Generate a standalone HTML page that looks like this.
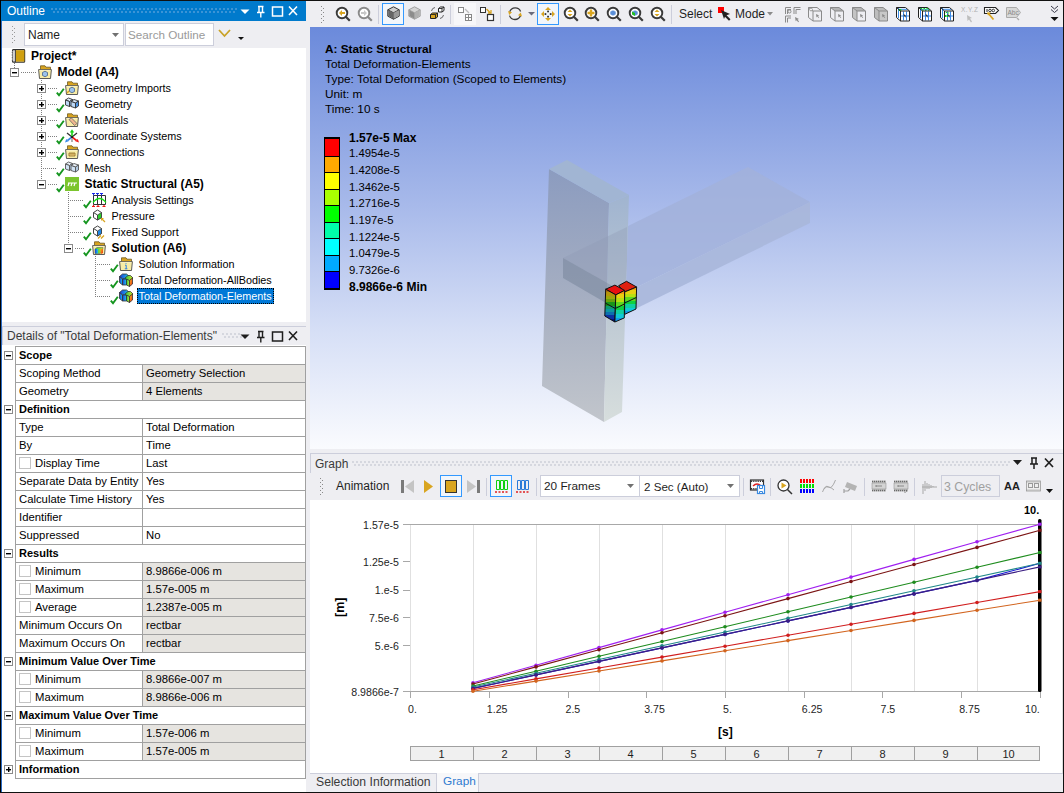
<!DOCTYPE html>
<html><head><meta charset="utf-8">
<style>
*{box-sizing:border-box;margin:0;padding:0}
html,body{width:1064px;height:793px;overflow:hidden;background:#EEEEF2;font-family:"Liberation Sans",sans-serif;color:#000;position:relative}
.a{position:absolute}
.t{position:absolute;white-space:pre;line-height:1}
svg{position:absolute;overflow:visible}
.dots{background-image:radial-gradient(circle at 1px 1px,#7fb0e0 0.6px,transparent 0.8px),radial-gradient(circle at 3px 4px,#7fb0e0 0.6px,transparent 0.8px);background-size:4px 6px}
.dotg{background-image:radial-gradient(circle at 1px 1px,#b8bcc8 0.6px,transparent 0.8px),radial-gradient(circle at 3px 4px,#b8bcc8 0.6px,transparent 0.8px);background-size:4px 6px}
.tr{position:absolute;font-size:10.8px;white-space:pre;line-height:16px;height:16px}
.trb{font-weight:bold;font-size:12px}
.box{position:absolute;width:9px;height:9px;border:1px solid #8a8a8a;background:#fff}
.box:before{content:"";position:absolute;left:1px;top:3px;width:5px;height:1px;background:#000;box-shadow:0 0.4px 0 #000}
.box.p:after{content:"";position:absolute;left:2.5px;top:1px;width:1px;height:5px;background:#000;box-shadow:0.4px 0 0 #000}
.hd{position:absolute;height:1px;background-image:linear-gradient(90deg,#808080 50%,transparent 50%);background-size:2px 1px}
.vd{position:absolute;width:1px;background-image:linear-gradient(#808080 50%,transparent 50%);background-size:1px 2px}
.k{position:absolute;font-size:11.3px;white-space:pre;line-height:1}
.kb{font-weight:bold;font-size:11px}
.cb{position:absolute;width:12px;height:12px;border:1px solid #C4C4C4;background:#fff}
.sep{position:absolute;width:1px;background:#CCCEDB}
</style></head><body>
<div class="a" style="left:0;top:0;width:1064px;height:1px;background:#111"></div>
<div class="a" style="left:0;top:0;width:1px;height:793px;background:#000"></div>
<div class="a" style="left:1px;top:21px;width:1px;height:772px;background:#2b6cc4"></div>
<div class="a" style="left:1063px;top:0;width:1px;height:793px;background:#111"></div>
<div class="a" style="left:0;top:792px;width:1064px;height:1px;background:#111"></div>
<div class="a" style="left:1px;top:1px;width:305px;height:20px;background:#007ACC"></div>
<div class="t" style="left:7px;top:5px;font-size:12px;color:#fff">Outline</div>
<div class="a dots" style="left:51px;top:8px;width:186px;height:6px"></div>
<svg style="left:240px;top:5px" width="60" height="13" viewBox="0 0 60 13">
 <path d="M0.5 4.5h9l-4.5 4.5z" fill="#fff"/>
 <path d="M18 1.5h5.5M19 1.5v6M22.5 1.5v6M17 7.5h7.5M20.8 7.5v5" stroke="#fff" stroke-width="1.4" fill="none"/>
 <rect x="32.5" y="2" width="10" height="9" stroke="#fff" stroke-width="1.5" fill="none"/>
 <path d="M49 1.5l8 8.5M57 1.5l-8 8.5" stroke="#fff" stroke-width="1.6"/>
</svg>
<!-- outline toolbar -->
<svg style="left:12px;top:26px" width="4" height="18" viewBox="0 0 4 18"><rect x="0" y="0" width="1" height="1" fill="#999"/><rect x="2" y="2" width="1" height="1" fill="#999"/><rect x="0" y="4" width="1" height="1" fill="#999"/><rect x="2" y="6" width="1" height="1" fill="#999"/><rect x="0" y="8" width="1" height="1" fill="#999"/><rect x="2" y="10" width="1" height="1" fill="#999"/><rect x="0" y="12" width="1" height="1" fill="#999"/><rect x="2" y="14" width="1" height="1" fill="#999"/><rect x="0" y="16" width="1" height="1" fill="#999"/></svg>
<div class="a" style="left:24px;top:23px;width:100px;height:23px;background:#fff;border:1px solid #CCCEDB"></div>
<div class="t" style="left:28px;top:29px;font-size:12px;color:#1e1e1e">Name</div>
<svg style="left:112px;top:33px" width="8" height="5"><path d="M0 0h7l-3.5 4z" fill="#717171"/></svg>
<div class="a" style="left:125px;top:23px;width:89px;height:23px;background:#fff;border:1px solid #CCCEDB"></div>
<div class="t" style="left:128px;top:29px;font-size:11.7px;color:#9a9a9a">Search Outline</div>
<svg style="left:218px;top:29px" width="14" height="9"><path d="M1 1l5.5 6 5.5-6" stroke="#C9A227" stroke-width="1.8" fill="none"/></svg>
<svg style="left:238px;top:37px" width="7" height="4"><path d="M0 0h6l-3 3z" fill="#111"/></svg>
<div class="a" style="left:2px;top:48px;width:304px;height:274px;background:#fff"></div>
<svg style="left:0;top:0" width="0" height="0"><defs><linearGradient id="rg1" x1="0" y1="0" x2="1" y2="0"><stop offset="0" stop-color="#1a3ad8"/><stop offset="1" stop-color="#20d0e8"/></linearGradient><linearGradient id="rg2" x1="0" y1="0" x2="1" y2="0"><stop offset="0" stop-color="#20c850"/><stop offset="1" stop-color="#d8e020"/></linearGradient><linearGradient id="rg3" x1="0" y1="0" x2="1" y2="1"><stop offset="0" stop-color="#f0c020"/><stop offset="1" stop-color="#f02810"/></linearGradient></defs></svg>
<div class="vd" style="left:14px;top:63px;height:6px"></div>
<div class="vd" style="left:41px;top:80px;height:100px"></div>
<div class="vd" style="left:68px;top:192px;height:53px"></div>
<div class="vd" style="left:95px;top:256px;height:42px"></div>
<svg style="left:11px;top:48px" width="14" height="14" viewBox="0 0 14 14"><rect x="1.6" y="1.6" width="12" height="12.6" rx="0.8" fill="#fff" stroke="#333" stroke-width="1.2"/><rect x="4.6" y="2.2" width="8.8" height="11.4" fill="#D0A010"/><path d="M4.3 1.6v12.6" stroke="#333" stroke-width="1.1"/><path d="M1 3q1.2 0.8 0 1.6q1.2 0.8 0 1.6q1.2 0.8 0 1.6q1.2 0.8 0 1.6q1.2 0.8 0 1.6q1.2 .8 0 1.6" stroke="#aaa" stroke-width="1" fill="none"/></svg>
<div class="tr trb" style="left:31px;top:48px">Project*</div>
<div class="box" style="left:10px;top:68px"></div>
<div class="hd" style="left:21px;top:72px;width:16px"></div>
<svg style="left:38px;top:65px" width="14" height="14" viewBox="0 0 14 14"><path d="M2.5 0.8h4.5l1 1.4h4.5v3.3H2.5z" fill="#D8A420" stroke="#6e5820" stroke-width="0.8"/><path d="M0.6 4.6h12.8l-0.9 8.9H1.5z" fill="#F8ECA6" stroke="#4a4a4a" stroke-width="0.9"/><path d="M1.6 5.4h10.8" stroke="#fff8d0" stroke-width="0.8"/><path d="M4.5 7.5l2.5-1.3 2.5 1.3v3l-2.5 1.3-2.5-1.3z" fill="#9cc3ec" stroke="#44628a" stroke-width="0.8"/></svg>
<div class="tr trb" style="left:57.5px;top:64px">Model (A4)</div>
<div class="box p" style="left:37px;top:84px"></div>
<div class="hd" style="left:48px;top:88px;width:9px"></div>
<svg style="left:56px;top:88px" width="9" height="9" viewBox="0 0 9 9"><path d="M0.8 4.6l2.2 2.6 4.8-6.4" stroke="#14951e" stroke-width="1.9" fill="none"/></svg>
<svg style="left:65px;top:81px" width="14" height="14" viewBox="0 0 14 14"><path d="M2.5 0.8h4.5l1 1.4h4.5v3.3H2.5z" fill="#D8A420" stroke="#6e5820" stroke-width="0.8"/><path d="M0.6 4.6h12.8l-0.9 8.9H1.5z" fill="#F8ECA6" stroke="#4a4a4a" stroke-width="0.9"/><path d="M1.6 5.4h10.8" stroke="#fff8d0" stroke-width="0.8"/><path d="M4.5 7.5l2.5-1.3 2.5 1.3v3l-2.5 1.3-2.5-1.3z" fill="#9cc3ec" stroke="#44628a" stroke-width="0.8"/><path d="M2 12l2-2" stroke="#D9A520" stroke-width="1.5"/></svg>
<div class="tr" style="left:84.5px;top:80px">Geometry Imports</div>
<div class="box p" style="left:37px;top:100px"></div>
<div class="hd" style="left:48px;top:104px;width:9px"></div>
<svg style="left:56px;top:104px" width="9" height="9" viewBox="0 0 9 9"><path d="M0.8 4.6l2.2 2.6 4.8-6.4" stroke="#14951e" stroke-width="1.9" fill="none"/></svg>
<svg style="left:65px;top:97px" width="14" height="14" viewBox="0 0 14 14"><path d="M0.5 3l3-2 4 1.5-3 2z" fill="#DDEBFA" stroke="#333" stroke-width="0.9"/><path d="M0.5 3l4 1.5v5l-4-1.5z" fill="#BCD8F6" stroke="#333" stroke-width="0.9"/><path d="M4.5 4.5l3-2v5l-3 2z" fill="#9CC4EE" stroke="#333" stroke-width="0.9"/><path d="M6 4.5l3-2 4.5 1.5-3 2z" fill="#DDEBFA" stroke="#333" stroke-width="0.9"/><path d="M6 4.5l4.5 1.5v5L6 9.5z" fill="#BCD8F6" stroke="#333" stroke-width="0.9"/><path d="M10.5 6l3-2v5l-3 2z" fill="#4C94E4" stroke="#333" stroke-width="0.9"/></svg>
<div class="tr" style="left:84.5px;top:96px">Geometry</div>
<div class="box p" style="left:37px;top:116px"></div>
<div class="hd" style="left:48px;top:120px;width:9px"></div>
<svg style="left:56px;top:120px" width="9" height="9" viewBox="0 0 9 9"><path d="M0.8 4.6l2.2 2.6 4.8-6.4" stroke="#14951e" stroke-width="1.9" fill="none"/></svg>
<svg style="left:65px;top:113px" width="14" height="14" viewBox="0 0 14 14"><path d="M2.5 0.8h4.5l1 1.4h4.5v3.3H2.5z" fill="#D8A420" stroke="#6e5820" stroke-width="0.8"/><path d="M0.6 4.6h12.8l-0.9 8.9H1.5z" fill="#F8ECA6" stroke="#4a4a4a" stroke-width="0.9"/><path d="M1.6 5.4h10.8" stroke="#fff8d0" stroke-width="0.8"/><path d="M4 6.5l2.5-1.5 5.5 5.5-2.5 2z" fill="#F2B890" stroke="#666" stroke-width="0.8"/></svg>
<div class="tr" style="left:84.5px;top:112px">Materials</div>
<div class="box p" style="left:37px;top:132px"></div>
<div class="hd" style="left:48px;top:136px;width:9px"></div>
<svg style="left:56px;top:136px" width="9" height="9" viewBox="0 0 9 9"><path d="M0.8 4.6l2.2 2.6 4.8-6.4" stroke="#14951e" stroke-width="1.9" fill="none"/></svg>
<svg style="left:65px;top:129px" width="14" height="14" viewBox="0 0 14 14"><path d="M7 8L2 4M7 8l5-4" stroke="#333" stroke-width="1.3"/><path d="M7 8V3" stroke="#18d018" stroke-width="1.6"/><path d="M4.8 3.6L7 0.3l2.2 3.3z" fill="#18d018"/><path d="M7 8l-4.5 3.5" stroke="#3a8ae8" stroke-width="1.6"/><path d="M0 13.5l1.2-3.6 2.4 2.4z" fill="#3a8ae8"/><path d="M7 8l4.5 3.5" stroke="#f01818" stroke-width="1.6"/><path d="M14 13.5l-1.2-3.6-2.4 2.4z" fill="#f01818"/><path d="M7 9.5V13" stroke="#888" stroke-width="1.3"/><circle cx="7" cy="8" r="1.1" fill="#111"/></svg>
<div class="tr" style="left:84.5px;top:128px">Coordinate Systems</div>
<div class="box p" style="left:37px;top:148px"></div>
<div class="hd" style="left:48px;top:152px;width:9px"></div>
<svg style="left:56px;top:152px" width="9" height="9" viewBox="0 0 9 9"><path d="M0.8 4.6l2.2 2.6 4.8-6.4" stroke="#14951e" stroke-width="1.9" fill="none"/></svg>
<svg style="left:65px;top:145px" width="14" height="14" viewBox="0 0 14 14"><path d="M2.5 0.8h4.5l1 1.4h4.5v3.3H2.5z" fill="#D8A420" stroke="#6e5820" stroke-width="0.8"/><path d="M0.6 4.6h12.8l-0.9 8.9H1.5z" fill="#F8ECA6" stroke="#4a4a4a" stroke-width="0.9"/><path d="M1.6 5.4h10.8" stroke="#fff8d0" stroke-width="0.8"/><path d="M4 8h6v3H4z" fill="#F2D080" stroke="#8a6a20" stroke-width="0.8"/><path d="M5 9h4" stroke="#8a6a20" stroke-width="0.6"/></svg>
<div class="tr" style="left:84.5px;top:144px">Connections</div>
<div class="hd" style="left:41px;top:168px;width:15px"></div>
<svg style="left:56px;top:168px" width="9" height="9" viewBox="0 0 9 9"><path d="M0.8 4.6l2.2 2.6 4.8-6.4" stroke="#14951e" stroke-width="1.9" fill="none"/></svg>
<svg style="left:65px;top:161px" width="14" height="14" viewBox="0 0 14 14"><path d="M0.5 3l3-2 4 1.5-3 2z" fill="#E8F0F8" stroke="#555" stroke-width="0.9"/><path d="M0.5 3l4 1.5v5l-4-1.5z" fill="#D0E2F4" stroke="#555" stroke-width="0.9"/><path d="M4.5 4.5l3-2v5l-3 2z" fill="#B8D0E8" stroke="#555" stroke-width="0.9"/><path d="M6 4.5l3-2 4.5 1.5-3 2z" fill="#E8F0F8" stroke="#555" stroke-width="0.9"/><path d="M6 4.5l4.5 1.5v5L6 9.5z" fill="#D0E2F4" stroke="#555" stroke-width="0.9"/><path d="M10.5 6l3-2v5l-3 2z" fill="#B0C8E0" stroke="#555" stroke-width="0.9"/></svg>
<div class="tr" style="left:84.5px;top:160px">Mesh</div>
<div class="box" style="left:37px;top:180px"></div>
<div class="hd" style="left:48px;top:184px;width:9px"></div>
<svg style="left:56px;top:184px" width="9" height="9" viewBox="0 0 9 9"><path d="M0.8 4.6l2.2 2.6 4.8-6.4" stroke="#14951e" stroke-width="1.9" fill="none"/></svg>
<svg style="left:65px;top:177px" width="14" height="14" viewBox="0 0 14 14"><rect x="0" y="0" width="14" height="14" fill="#7CC52E"/><path d="M3 6h9M4 6l-1 3M7 6l-1 3M10 6l-1 3" stroke="#fff" stroke-width="1.2"/></svg>
<div class="tr trb" style="left:84.5px;top:176px">Static Structural (A5)</div>
<div class="hd" style="left:68px;top:200px;width:15px"></div>
<svg style="left:83px;top:200px" width="9" height="9" viewBox="0 0 9 9"><path d="M0.8 4.6l2.2 2.6 4.8-6.4" stroke="#14951e" stroke-width="1.9" fill="none"/></svg>
<svg style="left:92px;top:193px" width="14" height="14" viewBox="0 0 14 14"><path d="M1.5 2.5h12v9h-12zM5.5 2.5v9M9.5 2.5v9" stroke="#333" fill="none" stroke-width="1"/><path d="M1 9.5Q7.5 1.5 14 9.5" stroke="#18e018" stroke-width="1.3" fill="none"/><path d="M0 0.5h3M4 0.5h3M8 0.5h3M1.5 0.5v2M5.5 0.5v2M9.5 0.5v2" stroke="#1828e8" stroke-width="1"/><path d="M0 13.5h3M4.5 13.5h3M10.5 13.5h3M1.5 12v1.5M6 12v1.5M12 12v1.5" stroke="#f01818" stroke-width="1.2"/></svg>
<div class="tr" style="left:111.5px;top:192px">Analysis Settings</div>
<div class="hd" style="left:68px;top:216px;width:15px"></div>
<svg style="left:83px;top:216px" width="9" height="9" viewBox="0 0 9 9"><path d="M0.8 4.6l2.2 2.6 4.8-6.4" stroke="#14951e" stroke-width="1.9" fill="none"/></svg>
<svg style="left:92px;top:209px" width="14" height="14" viewBox="0 0 14 14"><path d="M1.5 3.5l4-2.5 4 2.5v5l-4 2.5-4-2.5z" fill="#fff" stroke="#444"/><path d="M5.5 6l4-2.5v5l-4 2.5z" fill="#2bd12b" stroke="#444" stroke-width="0.8"/><path d="M1.5 3.5l4 2.5v5" stroke="#444" fill="none"/><path d="M9.5 9.5l3.5 3.5" stroke="#D9A520" stroke-width="1.3"/><path d="M9 9h3l-3 3z" fill="#D9A520"/></svg>
<div class="tr" style="left:111.5px;top:208px">Pressure</div>
<div class="hd" style="left:68px;top:232px;width:15px"></div>
<svg style="left:83px;top:232px" width="9" height="9" viewBox="0 0 9 9"><path d="M0.8 4.6l2.2 2.6 4.8-6.4" stroke="#14951e" stroke-width="1.9" fill="none"/></svg>
<svg style="left:92px;top:225px" width="14" height="14" viewBox="0 0 14 14"><path d="M1.5 3.5l4-2.5 4 2.5v5l-4 2.5-4-2.5z" fill="#fff" stroke="#444"/><path d="M5.5 6l4-2.5v5l-4 2.5z" fill="#1e88e5" stroke="#444" stroke-width="0.8"/><path d="M1.5 3.5l4 2.5v5" stroke="#444" fill="none"/><path d="M6 13.5l3-3M9 13.5l3-3" stroke="#D9A520" stroke-width="1.3"/></svg>
<div class="tr" style="left:111.5px;top:224px">Fixed Support</div>
<div class="box" style="left:64px;top:244px"></div>
<div class="hd" style="left:75px;top:248px;width:9px"></div>
<svg style="left:83px;top:248px" width="9" height="9" viewBox="0 0 9 9"><path d="M0.8 4.6l2.2 2.6 4.8-6.4" stroke="#14951e" stroke-width="1.9" fill="none"/></svg>
<svg style="left:92px;top:241px" width="14" height="14" viewBox="0 0 14 14"><path d="M2.5 0.8h4.5l1 1.4h4.5v3.3H2.5z" fill="#D8A420" stroke="#6e5820" stroke-width="0.8"/><path d="M0.6 4.6h12.8l-0.9 8.9H1.5z" fill="#F8ECA6" stroke="#4a4a4a" stroke-width="0.9"/><path d="M1.6 5.4h10.8" stroke="#fff8d0" stroke-width="0.8"/><path d="M3 8l2-1.5h6l-1 4.5-2 1.5H3z" fill="url(#rg2)" stroke="#555" stroke-width="0.5"/><path d="M3 8h3v4.5H3z" fill="url(#rg1)"/><path d="M8 8h3v4l-2 1z" fill="url(#rg3)"/></svg>
<div class="tr trb" style="left:111.5px;top:240px">Solution (A6)</div>
<div class="hd" style="left:95px;top:264px;width:15px"></div>
<svg style="left:110px;top:264px" width="9" height="9" viewBox="0 0 9 9"><path d="M0.8 4.6l2.2 2.6 4.8-6.4" stroke="#14951e" stroke-width="1.9" fill="none"/></svg>
<svg style="left:119px;top:257px" width="14" height="14" viewBox="0 0 14 14"><path d="M2.5 0.8h4.5l1 1.4h4.5v3.3H2.5z" fill="#D8A420" stroke="#6e5820" stroke-width="0.8"/><path d="M0.6 4.6h12.8l-0.9 8.9H1.5z" fill="#F8ECA6" stroke="#4a4a4a" stroke-width="0.9"/><path d="M1.6 5.4h10.8" stroke="#fff8d0" stroke-width="0.8"/><path d="M7 6.2v0.8M6 8.2h1.2v3.6M5.8 11.8h2.6" stroke="#3080e0" stroke-width="1" fill="none"/></svg>
<div class="tr" style="left:138.5px;top:256px">Solution Information</div>
<div class="hd" style="left:95px;top:280px;width:15px"></div>
<svg style="left:110px;top:280px" width="9" height="9" viewBox="0 0 9 9"><path d="M0.8 4.6l2.2 2.6 4.8-6.4" stroke="#14951e" stroke-width="1.9" fill="none"/></svg>
<svg style="left:119px;top:273px" width="14" height="14" viewBox="0 0 14 14"><path d="M0.5 3.5l2.5-2h4.5l2.5 1.5 2.5-1.5h1v0l-0.5 0 0 0z" fill="none"/><path d="M0.5 3.5l3-2.5h4l3 2.5 -3 2.5h-4z" fill="url(#rg1)" stroke="#333" stroke-width="0.8"/><path d="M0.5 3.5l3 2.5v6l-3-2.5z" fill="url(#rg1)" stroke="#333" stroke-width="0.8"/><path d="M3.5 6h4v6h-4z" fill="url(#rg1)" stroke="#333" stroke-width="0.8"/><path d="M6 5l3-2.5h2.5l2.5 2.5-3 2.5H8z" fill="url(#rg2)" stroke="#333" stroke-width="0.8"/><path d="M7.5 6l3 1.5v6l-3-1.5z" fill="url(#rg2)" stroke="#333" stroke-width="0.8"/><path d="M10.5 7.5l3-2.5v6l-3 2.5z" fill="url(#rg3)" stroke="#333" stroke-width="0.8"/></svg>
<div class="tr" style="left:138.5px;top:272px">Total Deformation-AllBodies</div>
<div class="hd" style="left:95px;top:296px;width:15px"></div>
<svg style="left:110px;top:296px" width="9" height="9" viewBox="0 0 9 9"><path d="M0.8 4.6l2.2 2.6 4.8-6.4" stroke="#14951e" stroke-width="1.9" fill="none"/></svg>
<svg style="left:119px;top:289px" width="14" height="14" viewBox="0 0 14 14"><path d="M0.5 3.5l2.5-2h4.5l2.5 1.5 2.5-1.5h1v0l-0.5 0 0 0z" fill="none"/><path d="M0.5 3.5l3-2.5h4l3 2.5 -3 2.5h-4z" fill="url(#rg1)" stroke="#333" stroke-width="0.8"/><path d="M0.5 3.5l3 2.5v6l-3-2.5z" fill="url(#rg1)" stroke="#333" stroke-width="0.8"/><path d="M3.5 6h4v6h-4z" fill="url(#rg1)" stroke="#333" stroke-width="0.8"/><path d="M6 5l3-2.5h2.5l2.5 2.5-3 2.5H8z" fill="url(#rg2)" stroke="#333" stroke-width="0.8"/><path d="M7.5 6l3 1.5v6l-3-1.5z" fill="url(#rg2)" stroke="#333" stroke-width="0.8"/><path d="M10.5 7.5l3-2.5v6l-3 2.5z" fill="url(#rg3)" stroke="#333" stroke-width="0.8"/></svg>
<div class="a" style="left:137px;top:288px;width:137px;height:16px;background:#0078D7;outline:1px dotted #000;outline-offset:-1px"></div>
<div class="tr" style="left:138.5px;top:288px;color:#fff">Total Deformation-Elements</div><div class="a" style="left:2px;top:322px;width:304px;height:4px;background:#EEEEF2"></div>
<div class="a" style="left:2px;top:326px;width:304px;height:1px;background:#CCCEDB"></div>
<div class="a" style="left:2px;top:326px;width:1px;height:19px;background:#CCCEDB"></div>
<div class="t" style="left:7px;top:330px;font-size:12px;color:#3a3a3a">Details of "Total Deformation-Elements"</div>
<div class="a dotg" style="left:222px;top:333px;width:20px;height:6px"></div>
<svg style="left:240px;top:330px" width="60" height="13" viewBox="0 0 60 13"><path d="M0.5 4.5h9l-4.5 4.5z" fill="#1e1e1e"/><path d="M18 1.5h5.5M19 1.5v6M22.5 1.5v6M17 7.5h7.5M20.8 7.5v5" stroke="#1e1e1e" stroke-width="1.4" fill="none"/><rect x="32.5" y="2" width="10" height="9" stroke="#1e1e1e" stroke-width="1.5" fill="none"/><path d="M49 1.5l8 8.5M57 1.5l-8 8.5" stroke="#1e1e1e" stroke-width="1.6"/></svg>
<div class="a" style="left:2px;top:345px;width:304px;height:447px;background:#fff"></div>
<div class="box" style="left:4px;top:351px;border-color:#8a8a8a"></div>
<div class="k kb" style="left:19px;top:350px">Scope</div>
<div class="a" style="left:15px;top:346px;width:291px;height:1px;background:#A0A0A0"></div>
<div class="a" style="left:143px;top:365px;width:162px;height:17px;background:#E6E4E0"></div>
<div class="a" style="left:142px;top:364px;width:1px;height:18px;background:#A0A0A0"></div>
<div class="k" style="left:19px;top:368px">Scoping Method</div>
<div class="k" style="left:146px;top:368px">Geometry Selection</div>
<div class="a" style="left:15px;top:364px;width:291px;height:1px;background:#A0A0A0"></div>
<div class="a" style="left:143px;top:383px;width:162px;height:17px;background:#E6E4E0"></div>
<div class="a" style="left:142px;top:382px;width:1px;height:18px;background:#A0A0A0"></div>
<div class="k" style="left:19px;top:386px">Geometry</div>
<div class="k" style="left:146px;top:386px">4 Elements</div>
<div class="a" style="left:15px;top:382px;width:291px;height:1px;background:#A0A0A0"></div>
<div class="box" style="left:4px;top:405px;border-color:#8a8a8a"></div>
<div class="k kb" style="left:19px;top:404px">Definition</div>
<div class="a" style="left:15px;top:400px;width:291px;height:1px;background:#A0A0A0"></div>
<div class="a" style="left:142px;top:418px;width:1px;height:18px;background:#A0A0A0"></div>
<div class="k" style="left:19px;top:422px">Type</div>
<div class="k" style="left:146px;top:422px">Total Deformation</div>
<div class="a" style="left:15px;top:418px;width:291px;height:1px;background:#A0A0A0"></div>
<div class="a" style="left:142px;top:436px;width:1px;height:18px;background:#A0A0A0"></div>
<div class="k" style="left:19px;top:440px">By</div>
<div class="k" style="left:146px;top:440px">Time</div>
<div class="a" style="left:15px;top:436px;width:291px;height:1px;background:#A0A0A0"></div>
<div class="a" style="left:142px;top:454px;width:1px;height:18px;background:#A0A0A0"></div>
<div class="cb" style="left:19px;top:457px"></div>
<div class="k" style="left:35px;top:458px">Display Time</div>
<div class="k" style="left:146px;top:458px">Last</div>
<div class="a" style="left:15px;top:454px;width:291px;height:1px;background:#A0A0A0"></div>
<div class="a" style="left:142px;top:472px;width:1px;height:18px;background:#A0A0A0"></div>
<div class="k" style="left:19px;top:476px">Separate Data by Entity</div>
<div class="k" style="left:146px;top:476px">Yes</div>
<div class="a" style="left:15px;top:472px;width:291px;height:1px;background:#A0A0A0"></div>
<div class="a" style="left:142px;top:490px;width:1px;height:18px;background:#A0A0A0"></div>
<div class="k" style="left:19px;top:494px">Calculate Time History</div>
<div class="k" style="left:146px;top:494px">Yes</div>
<div class="a" style="left:15px;top:490px;width:291px;height:1px;background:#A0A0A0"></div>
<div class="a" style="left:142px;top:508px;width:1px;height:18px;background:#A0A0A0"></div>
<div class="k" style="left:19px;top:512px">Identifier</div>
<div class="a" style="left:15px;top:508px;width:291px;height:1px;background:#A0A0A0"></div>
<div class="a" style="left:142px;top:526px;width:1px;height:18px;background:#A0A0A0"></div>
<div class="k" style="left:19px;top:530px">Suppressed</div>
<div class="k" style="left:146px;top:530px">No</div>
<div class="a" style="left:15px;top:526px;width:291px;height:1px;background:#A0A0A0"></div>
<div class="box" style="left:4px;top:549px;border-color:#8a8a8a"></div>
<div class="k kb" style="left:19px;top:548px">Results</div>
<div class="a" style="left:15px;top:544px;width:291px;height:1px;background:#A0A0A0"></div>
<div class="a" style="left:143px;top:563px;width:162px;height:17px;background:#E6E4E0"></div>
<div class="a" style="left:142px;top:562px;width:1px;height:18px;background:#A0A0A0"></div>
<div class="cb" style="left:19px;top:565px"></div>
<div class="k" style="left:35px;top:566px">Minimum</div>
<div class="k" style="left:146px;top:566px">8.9866e-006 m</div>
<div class="a" style="left:15px;top:562px;width:291px;height:1px;background:#A0A0A0"></div>
<div class="a" style="left:143px;top:581px;width:162px;height:17px;background:#E6E4E0"></div>
<div class="a" style="left:142px;top:580px;width:1px;height:18px;background:#A0A0A0"></div>
<div class="cb" style="left:19px;top:583px"></div>
<div class="k" style="left:35px;top:584px">Maximum</div>
<div class="k" style="left:146px;top:584px">1.57e-005 m</div>
<div class="a" style="left:15px;top:580px;width:291px;height:1px;background:#A0A0A0"></div>
<div class="a" style="left:143px;top:599px;width:162px;height:17px;background:#E6E4E0"></div>
<div class="a" style="left:142px;top:598px;width:1px;height:18px;background:#A0A0A0"></div>
<div class="cb" style="left:19px;top:601px"></div>
<div class="k" style="left:35px;top:602px">Average</div>
<div class="k" style="left:146px;top:602px">1.2387e-005 m</div>
<div class="a" style="left:15px;top:598px;width:291px;height:1px;background:#A0A0A0"></div>
<div class="a" style="left:143px;top:617px;width:162px;height:17px;background:#E6E4E0"></div>
<div class="a" style="left:142px;top:616px;width:1px;height:18px;background:#A0A0A0"></div>
<div class="k" style="left:19px;top:620px">Minimum Occurs On</div>
<div class="k" style="left:146px;top:620px">rectbar</div>
<div class="a" style="left:15px;top:616px;width:291px;height:1px;background:#A0A0A0"></div>
<div class="a" style="left:143px;top:635px;width:162px;height:17px;background:#E6E4E0"></div>
<div class="a" style="left:142px;top:634px;width:1px;height:18px;background:#A0A0A0"></div>
<div class="k" style="left:19px;top:638px">Maximum Occurs On</div>
<div class="k" style="left:146px;top:638px">rectbar</div>
<div class="a" style="left:15px;top:634px;width:291px;height:1px;background:#A0A0A0"></div>
<div class="box" style="left:4px;top:657px;border-color:#8a8a8a"></div>
<div class="k kb" style="left:19px;top:656px">Minimum Value Over Time</div>
<div class="a" style="left:15px;top:652px;width:291px;height:1px;background:#A0A0A0"></div>
<div class="a" style="left:143px;top:671px;width:162px;height:17px;background:#E6E4E0"></div>
<div class="a" style="left:142px;top:670px;width:1px;height:18px;background:#A0A0A0"></div>
<div class="cb" style="left:19px;top:673px"></div>
<div class="k" style="left:35px;top:674px">Minimum</div>
<div class="k" style="left:146px;top:674px">8.9866e-007 m</div>
<div class="a" style="left:15px;top:670px;width:291px;height:1px;background:#A0A0A0"></div>
<div class="a" style="left:143px;top:689px;width:162px;height:17px;background:#E6E4E0"></div>
<div class="a" style="left:142px;top:688px;width:1px;height:18px;background:#A0A0A0"></div>
<div class="cb" style="left:19px;top:691px"></div>
<div class="k" style="left:35px;top:692px">Maximum</div>
<div class="k" style="left:146px;top:692px">8.9866e-006 m</div>
<div class="a" style="left:15px;top:688px;width:291px;height:1px;background:#A0A0A0"></div>
<div class="box" style="left:4px;top:711px;border-color:#8a8a8a"></div>
<div class="k kb" style="left:19px;top:710px">Maximum Value Over Time</div>
<div class="a" style="left:15px;top:706px;width:291px;height:1px;background:#A0A0A0"></div>
<div class="a" style="left:143px;top:725px;width:162px;height:17px;background:#E6E4E0"></div>
<div class="a" style="left:142px;top:724px;width:1px;height:18px;background:#A0A0A0"></div>
<div class="cb" style="left:19px;top:727px"></div>
<div class="k" style="left:35px;top:728px">Minimum</div>
<div class="k" style="left:146px;top:728px">1.57e-006 m</div>
<div class="a" style="left:15px;top:724px;width:291px;height:1px;background:#A0A0A0"></div>
<div class="a" style="left:143px;top:743px;width:162px;height:17px;background:#E6E4E0"></div>
<div class="a" style="left:142px;top:742px;width:1px;height:18px;background:#A0A0A0"></div>
<div class="cb" style="left:19px;top:745px"></div>
<div class="k" style="left:35px;top:746px">Maximum</div>
<div class="k" style="left:146px;top:746px">1.57e-005 m</div>
<div class="a" style="left:15px;top:742px;width:291px;height:1px;background:#A0A0A0"></div>
<div class="box p" style="left:4px;top:765px;border-color:#8a8a8a"></div>
<div class="k kb" style="left:19px;top:764px">Information</div>
<div class="a" style="left:15px;top:760px;width:291px;height:1px;background:#A0A0A0"></div>
<div class="a" style="left:15px;top:778px;width:291px;height:1px;background:#A0A0A0"></div>
<div class="a" style="left:15px;top:346px;width:1px;height:432px;background:#A0A0A0"></div>
<div class="a" style="left:305px;top:346px;width:1px;height:432px;background:#A0A0A0"></div><svg style="left:321px;top:6px" width="4" height="18" viewBox="0 0 4 18"><rect x="0" y="0" width="1" height="1" fill="#8a8a8a"/><rect x="2" y="2" width="1" height="1" fill="#8a8a8a"/><rect x="0" y="4" width="1" height="1" fill="#8a8a8a"/><rect x="2" y="6" width="1" height="1" fill="#8a8a8a"/><rect x="0" y="8" width="1" height="1" fill="#8a8a8a"/><rect x="2" y="10" width="1" height="1" fill="#8a8a8a"/><rect x="0" y="12" width="1" height="1" fill="#8a8a8a"/><rect x="2" y="14" width="1" height="1" fill="#8a8a8a"/><rect x="0" y="16" width="1" height="1" fill="#8a8a8a"/></svg>
<svg style="left:335px;top:6px" width="16" height="16" viewBox="0 0 16 16"><circle cx="7" cy="7" r="5.3" stroke="#3a3a3a" stroke-width="1.9" fill="#fff"/><path d="M10.8 10.8l4 4" stroke="#3a3a3a" stroke-width="2.2"/><path d="M4 7l3-3v2h3v2H7v2z" fill="#D9A520"/></svg>
<svg style="left:357px;top:6px" width="16" height="16" viewBox="0 0 16 16"><circle cx="7" cy="7" r="5.3" stroke="#8a8a8a" stroke-width="1.9" fill="#fff"/><path d="M10.8 10.8l4 4" stroke="#8a8a8a" stroke-width="2.2"/><path d="M10 7L7 4v2H4v2h3v2z" fill="#c8c8c8"/></svg>
<div class="sep" style="left:378px;top:5px;height:19px"></div>
<div class="a" style="left:382px;top:3px;width:22px;height:22px;border:1px solid #3399FF;background:#F2F6FB"></div>
<svg style="left:387px;top:6px" width="14" height="14" viewBox="0 0 14 14"><path d="M6.5 0.8l5.7 3v6.4l-5.7 3-5.7-3V3.8z" fill="#cfcfcf" stroke="#333" stroke-width="1"/><path d="M0.8 3.8l5.7 3 5.7-3" stroke="#333" fill="none" stroke-width="1"/><path d="M6.5 6.8v6.4" stroke="#333" stroke-width="1"/><path d="M1.3 4.3l5.2 2.8v5.6l-5.2-2.8z" fill="#666"/><path d="M11.7 4.3L6.5 7.1v5.6l5.2-2.8z" fill="#999"/></svg>
<svg style="left:408px;top:6px" width="14" height="14" viewBox="0 0 14 14"><path d="M6.5 0.8l5.7 3v6.4l-5.7 3-5.7-3V3.8z" fill="#d4d4d4" stroke="#a0a0a0" stroke-width="1"/><path d="M0.8 3.8l5.7 3 5.7-3" stroke="#a0a0a0" fill="none" stroke-width="1"/><path d="M6.5 6.8v6.4" stroke="#a0a0a0" stroke-width="1"/><path d="M1.3 4.3l5.2 2.8v5.6l-5.2-2.8z" fill="#8c8c8c"/><path d="M11.7 4.3L6.5 7.1v5.6l5.2-2.8z" fill="#b0b0b0"/></svg>
<svg style="left:430px;top:6px" width="15" height="15" viewBox="0 0 15 15"><path d="M8.5 2.5l2-1.5h3.5v3.5l-2 1.5H8.5z" fill="#fff" stroke="#222" stroke-width="1"/><path d="M8.5 2.5h3.5v3.5M12 2.5l2-1.5" stroke="#222" fill="none" stroke-width="0.9"/><path d="M0.5 8.5l2-1.5h5v4l-2 1.5h-5z" fill="#D9A520" stroke="#222" stroke-width="1"/><path d="M0.5 8.5h5v4M5.5 8.5l2-1.5" stroke="#222" fill="none" stroke-width="0.9"/><path d="M1.5 5q0.5-3 3.5-3.5M13.5 9q-0.5 3-3.5 3.5" stroke="#555" stroke-width="0.9" fill="none"/></svg>
<div class="sep" style="left:450px;top:5px;height:19px"></div>
<div class="a" style="left:454px;top:3px;width:22px;height:22px;background:#F7F7F9"></div>
<svg style="left:458px;top:7px" width="15" height="15" viewBox="0 0 15 15"><rect x="0.5" y="0.5" width="5" height="5" fill="#fff" stroke="#888"/><path d="M7 2l4 4" stroke="#bbb" stroke-width="1.3"/><rect x="7.5" y="7.5" width="6" height="6" fill="#fff" stroke="#888"/><path d="M10.5 7.5v6M7.5 10.5h6" stroke="#888"/></svg>
<svg style="left:480px;top:7px" width="15" height="15" viewBox="0 0 15 15"><rect x="0.5" y="0.5" width="5" height="5" fill="#fff" stroke="#333"/><path d="M6.5 2l4 4" stroke="#D9A520" stroke-width="1.5"/><path d="M8 6h3V3" stroke="#D9A520" stroke-width="1.3" fill="none"/><rect x="7.5" y="7.5" width="6" height="6" fill="#fff" stroke="#333" stroke-width="1.2"/></svg>
<div class="sep" style="left:500px;top:5px;height:19px"></div>
<svg style="left:508px;top:6px" width="15" height="15" viewBox="0 0 15 15"><path d="M1.7 5.8A5.8 5.8 0 0 1 12.6 5.6M12.4 9.8A5.8 5.8 0 0 1 1.5 9.6" stroke="#3a3a3a" stroke-width="1.3" fill="none"/><path d="M0 5L4 6.3 1.2 9z" fill="#D9A520"/><path d="M14 10.5L10 9.2 12.8 6.5z" fill="#D9A520"/></svg>
<svg style="left:528px;top:12px" width="7" height="5" viewBox="0 0 7 5"><path d="M0 0h7l-3.5 3.5z" fill="#6a6a7a"/></svg>
<div class="a" style="left:537px;top:3px;width:22px;height:22px;border:1px solid #3399FF;background:#F2F6FB"></div>
<svg style="left:541px;top:7px" width="15" height="15" viewBox="0 0 15 15"><path d="M7 0L10 3H4zM7 14L10 11H4zM0 7L3 4V10zM14 7L11 4V10z" fill="#D9A520"/><rect x="6.2" y="3.6" width="1.7" height="1.7" fill="#222"/><rect x="6.2" y="8.8" width="1.7" height="1.7" fill="#222"/><rect x="3.6" y="6.2" width="1.7" height="1.7" fill="#222"/><rect x="8.8" y="6.2" width="1.7" height="1.7" fill="#222"/></svg>
<svg style="left:563px;top:6px" width="16" height="16" viewBox="0 0 16 16"><circle cx="7" cy="7" r="5.3" stroke="#3a3a3a" stroke-width="1.9" fill="#fff"/><path d="M10.8 10.8l4 4" stroke="#3a3a3a" stroke-width="2.2"/><path d="M7 3.5l2.5 2.5h-5zM7 10.5l2.5-2.5h-5z" fill="#D9A520"/></svg>
<svg style="left:584px;top:6px" width="16" height="16" viewBox="0 0 16 16"><circle cx="7" cy="7" r="5.3" stroke="#3a3a3a" stroke-width="1.9" fill="#fff"/><path d="M10.8 10.8l4 4" stroke="#3a3a3a" stroke-width="2.2"/><path d="M5.8 3.5h2.4v2.3h2.3v2.4H8.2v2.3H5.8V8.2H3.5V5.8h2.3z" fill="#D9A520"/></svg>
<svg style="left:606px;top:6px" width="16" height="16" viewBox="0 0 16 16"><circle cx="7" cy="7" r="5.3" stroke="#3a3a3a" stroke-width="1.9" fill="#fff"/><path d="M10.8 10.8l4 4" stroke="#3a3a3a" stroke-width="2.2"/><path d="M7 4l3 1.5v3L7 10 4 8.5v-3z" fill="#5b8fd8" stroke="#fff" stroke-width="0.6"/></svg>
<svg style="left:628px;top:6px" width="16" height="16" viewBox="0 0 16 16"><circle cx="7" cy="7" r="5.3" stroke="#3a3a3a" stroke-width="1.9" fill="#fff"/><path d="M10.8 10.8l4 4" stroke="#3a3a3a" stroke-width="2.2"/><path d="M7 4l3 1.5v3L7 10 4 8.5v-3z" fill="#5b8fd8" stroke="#fff" stroke-width="0.6"/><path d="M4 5.5l3 1.5v3L4 8.5z" fill="#22c022"/></svg>
<svg style="left:650px;top:6px" width="16" height="16" viewBox="0 0 16 16"><circle cx="7" cy="7" r="5.3" stroke="#3a3a3a" stroke-width="1.9" fill="#fff"/><path d="M10.8 10.8l4 4" stroke="#3a3a3a" stroke-width="2.2"/><path d="M7 3.5l2.5 2.5h-5zM7 10.5l2.5-2.5h-5z" fill="#D9A520"/></svg>
<div class="sep" style="left:671px;top:5px;height:19px"></div>
<div class="t" style="left:679px;top:8px;font-size:12px;color:#1e1e1e">Select</div>
<div class="a" style="left:718px;top:7px;width:6px;height:6px;background:#F00"></div>
<svg style="left:720px;top:9px" width="12" height="13" viewBox="0 0 12 13"><path d="M1 1l9 4-3.5 1.2 4 4-1.5 1.5-4-4L4 10z" fill="#222"/></svg>
<div class="t" style="left:735px;top:8px;font-size:12px;color:#1e1e1e">Mode</div>
<svg style="left:767px;top:12px" width="7" height="5" viewBox="0 0 7 5"><path d="M0 0h6l-3 3.5z" fill="#8a8a8a"/></svg>
<svg style="left:785px;top:7px" width="16" height="16" viewBox="0 0 16 16"><path d="M0.5 7V0.5H6M2.5 7V2.5H6M9 7V0.5h6.5M11 7V2.5h4.5M0.5 15.5V9H6M2.5 15.5V11H6" stroke="#8a8a8a" fill="none" stroke-width="1"/><circle cx="4.5" cy="4.5" r="1.5" fill="none" stroke="#8a8a8a"/><path d="M10 10l4 2-1.5.5 1.5 2-.8.7-1.5-2-1 1z" fill="#8a8a8a"/></svg>
<svg style="left:808px;top:7px" width="15" height="15" viewBox="0 0 15 15"><path d="M0.5 0.5h8.5l4.5 3.5v10H5l-4.5-3.5z" fill="none" stroke="#8a8a8a" stroke-width="1"/><path d="M5 4h8.5M5 4v10M0.5 0.5L5 4" stroke="#8a8a8a" fill="none" stroke-width="1"/><path d="M8 7l3.2 1.6-1.3.4 1.3 1.6-.6.5-1.3-1.6-.8 1z" fill="#8a8a8a"/><circle cx="3" cy="2.5" r="1.4" fill="#fff" stroke="#8a8a8a" stroke-width="0.8"/></svg>
<svg style="left:830px;top:7px" width="15" height="15" viewBox="0 0 15 15"><path d="M0.5 0.5h8.5l4.5 3.5H5z" fill="#b4b4b4"/><path d="M0.5 0.5h8.5l4.5 3.5v10H5l-4.5-3.5z" fill="none" stroke="#8a8a8a" stroke-width="1"/><path d="M5 4h8.5M5 4v10M0.5 0.5L5 4" stroke="#8a8a8a" fill="none" stroke-width="1"/><path d="M8 7l3.2 1.6-1.3.4 1.3 1.6-.6.5-1.3-1.6-.8 1z" fill="#8a8a8a"/></svg>
<svg style="left:852px;top:7px" width="15" height="15" viewBox="0 0 15 15"><path d="M0.5 0.5h8.5l4.5 3.5H5z" fill="#b4b4b4"/><path d="M0.5 0.5L5 4v10l-4.5-3.5z" fill="#c4c4c4"/><path d="M0.5 0.5h8.5l4.5 3.5v10H5l-4.5-3.5z" fill="none" stroke="#8a8a8a" stroke-width="1"/><path d="M5 4h8.5M5 4v10M0.5 0.5L5 4" stroke="#8a8a8a" fill="none" stroke-width="1"/><path d="M8 7l3.2 1.6-1.3.4 1.3 1.6-.6.5-1.3-1.6-.8 1z" fill="#8a8a8a"/></svg>
<svg style="left:874px;top:7px" width="15" height="15" viewBox="0 0 15 15"><path d="M0.5 0.5h8.5l4.5 3.5v10H5l-4.5-3.5z" fill="#bdbdbd"/><path d="M5 4h8.5v10H5z" fill="#c8c8c8"/><path d="M0.5 0.5h8.5l4.5 3.5v10H5l-4.5-3.5z" fill="none" stroke="#8a8a8a" stroke-width="1"/><path d="M5 4h8.5M5 4v10M0.5 0.5L5 4" stroke="#8a8a8a" fill="none" stroke-width="1"/><path d="M8 7l3.2 1.6-1.3.4 1.3 1.6-.6.5-1.3-1.6-.8 1z" fill="#8a8a8a"/></svg>
<svg style="left:896px;top:7px" width="15" height="15" viewBox="0 0 15 15"><path d="M0.5 0.5h9l4 3.5v10h-9l-4-3.5z" fill="#fff"/><path d="M2.5 1v10M7.5 4.5v9M10.5 4.5v9M4.5 9h9M3 2.3h8" stroke="#3a8ae8" stroke-width="1"/><ellipse cx="4" cy="3" rx="1.5" ry="0.9" fill="#10e010"/><path d="M0.5 0.5h9l4 3.5v10h-9l-4-3.5z" fill="none" stroke="#222" stroke-width="1"/><path d="M4.5 4h9M4.5 4v10M0.5 0.5l4 3.5" stroke="#222" fill="none" stroke-width="1"/><path d="M7.5 7l2.6 1.4-1 .3 1 1.4-.5.4-1-1.4-.6.8z" fill="#333"/></svg>
<svg style="left:918px;top:7px" width="15" height="15" viewBox="0 0 15 15"><path d="M0.5 0.5h9l4 3.5v10h-9l-4-3.5z" fill="#fff"/><path d="M2.5 1v10M7.5 4.5v9M10.5 4.5v9M4.5 9h9M3 2.3h8" stroke="#3a8ae8" stroke-width="1"/><path d="M2.5 1.5h1.5M5.5 1.5h1.5M8.5 1.5h1.5M4 3.2h1.5M7 3.2h1.5M10 3.2h1.5" stroke="#10e010" stroke-width="1.2"/><path d="M0.5 0.5h9l4 3.5v10h-9l-4-3.5z" fill="none" stroke="#222" stroke-width="1"/><path d="M4.5 4h9M4.5 4v10M0.5 0.5l4 3.5" stroke="#222" fill="none" stroke-width="1"/><path d="M7.5 7l2.6 1.4-1 .3 1 1.4-.5.4-1-1.4-.6.8z" fill="#333"/></svg>
<svg style="left:940px;top:7px" width="15" height="15" viewBox="0 0 15 15"><path d="M0.5 0.5h9l4 3.5v10h-9l-4-3.5z" fill="#fff"/><path d="M2.5 1v10M7.5 4.5v9M10.5 4.5v9M4.5 9h9M3 2.3h8" stroke="#3a8ae8" stroke-width="1"/><path d="M4.5 5.5v1M6.5 5v1M8.5 5.5v1M5.5 8v2M7.5 8v2" stroke="#10e010" stroke-width="1.3"/><path d="M0.5 0.5h9l4 3.5v10h-9l-4-3.5z" fill="none" stroke="#222" stroke-width="1"/><path d="M4.5 4h9M4.5 4v10M0.5 0.5l4 3.5" stroke="#222" fill="none" stroke-width="1"/><path d="M7.5 7l2.6 1.4-1 .3 1 1.4-.5.4-1-1.4-.6.8z" fill="#333"/></svg>
<div class="t" style="left:961px;top:7px;font-size:6.5px;color:#b0b0b0;letter-spacing:0.4px">X.Y.Z</div>
<svg style="left:966px;top:14px" width="8" height="9" viewBox="0 0 8 9"><path d="M1 1l5 3-2 .5 2 3-1 1-2-3-1.5 1.5z" fill="#bdbdbd"/></svg>
<svg style="left:984px;top:6px" width="16" height="16" viewBox="0 0 16 16"><path d="M0.5 1.5h11l3 3-3 3h-11z" fill="#fff" stroke="#222" stroke-width="1.1"/><path d="M3 3v3" stroke="#222" stroke-width="1"/><circle cx="6" cy="4.5" r="1.3" stroke="#222" fill="none" stroke-width="0.9"/><circle cx="9.3" cy="4.5" r="1.3" stroke="#222" fill="none" stroke-width="0.9"/><path d="M4 7l5.5 6.5" stroke="#D9A520" stroke-width="1.8"/><path d="M3 6.5h4l-3 3z" fill="#D9A520"/></svg>
<svg style="left:1006px;top:7px" width="16" height="16" viewBox="0 0 16 16"><path d="M0.5 0.5h10l4 5-4 5h-10z" fill="#d8d8d8" stroke="#aaa" stroke-width="1"/><text x="1.5" y="8" font-size="6.5" font-family="Liberation Sans" fill="#888">Abc</text><path d="M11 11l2 2" stroke="#aaa" stroke-width="1.3"/></svg>
<svg style="left:1050px;top:5px" width="10" height="17" viewBox="0 0 10 17"><path d="M1 1l3.5 3 3.5-3M1 4.5l3.5 3 3.5-3" stroke="#3a3a4a" stroke-width="1" fill="none"/><path d="M0.5 12h8l-4 4z" fill="#111"/></svg><div class="a" style="left:310px;top:27px;width:753px;height:422px;background:linear-gradient(#6B8ADB,#A7B9EA 42%,#D6DFF6 72%,#FAFBFE)"></div>
<div class="t" style="left:325px;top:44px;font-size:11.8px;font-weight:bold;color:#000">A: Static Structural</div>
<div class="t" style="left:325px;top:59px;font-size:11.8px;font-weight:normal;color:#000">Total Deformation-Elements</div>
<div class="t" style="left:325px;top:74px;font-size:11.8px;font-weight:normal;color:#000">Type: Total Deformation (Scoped to Elements)</div>
<div class="t" style="left:325px;top:89px;font-size:11.8px;font-weight:normal;color:#000">Unit: m</div>
<div class="t" style="left:325px;top:104px;font-size:11.8px;font-weight:normal;color:#000">Time: 10 s</div>
<div class="a" style="left:324px;top:137px;width:16px;height:153px;background:#000"></div>
<div class="a" style="left:325px;top:139.00px;width:14px;height:16.56px;background:#FF0000"></div>
<div class="a" style="left:325px;top:156.56px;width:14px;height:15.56px;background:#FFAA00"></div>
<div class="a" style="left:325px;top:173.11px;width:14px;height:15.56px;background:#FFFF00"></div>
<div class="a" style="left:325px;top:189.67px;width:14px;height:15.56px;background:#AAFF00"></div>
<div class="a" style="left:325px;top:206.22px;width:14px;height:15.56px;background:#00FF00"></div>
<div class="a" style="left:325px;top:222.78px;width:14px;height:15.56px;background:#00FFAA"></div>
<div class="a" style="left:325px;top:239.33px;width:14px;height:15.56px;background:#00FFFF"></div>
<div class="a" style="left:325px;top:255.89px;width:14px;height:15.56px;background:#00AAFF"></div>
<div class="a" style="left:325px;top:272.44px;width:14px;height:15.56px;background:#0000FF"></div>
<div class="t" style="left:349px;top:131.6px;font-size:12px;font-weight:bold;color:#000">1.57e-5 Max</div>
<div class="t" style="left:349px;top:148.2px;font-size:11.3px;font-weight:normal;color:#000">1.4954e-5</div>
<div class="t" style="left:349px;top:164.9px;font-size:11.3px;font-weight:normal;color:#000">1.4208e-5</div>
<div class="t" style="left:349px;top:181.5px;font-size:11.3px;font-weight:normal;color:#000">1.3462e-5</div>
<div class="t" style="left:349px;top:198.2px;font-size:11.3px;font-weight:normal;color:#000">1.2716e-5</div>
<div class="t" style="left:349px;top:214.8px;font-size:11.3px;font-weight:normal;color:#000">1.197e-5</div>
<div class="t" style="left:349px;top:231.5px;font-size:11.3px;font-weight:normal;color:#000">1.1224e-5</div>
<div class="t" style="left:349px;top:248.1px;font-size:11.3px;font-weight:normal;color:#000">1.0479e-5</div>
<div class="t" style="left:349px;top:264.8px;font-size:11.3px;font-weight:normal;color:#000">9.7326e-6</div>
<div class="t" style="left:349px;top:281.4px;font-size:12px;font-weight:bold;color:#000">8.9866e-6 Min</div>
<svg style="left:0;top:0" width="1064" height="793" viewBox="0 0 1064 793"><defs><linearGradient id="pf" x1="0" y1="0" x2="0" y2="1"><stop offset="0" stop-color="#8B9BBE"/><stop offset="0.5" stop-color="#A4ADC0"/><stop offset="1" stop-color="#C0C4CA"/></linearGradient><linearGradient id="pr" x1="0" y1="0" x2="0" y2="1"><stop offset="0" stop-color="#A0B4CF"/><stop offset="0.5" stop-color="#BCC8D2"/><stop offset="1" stop-color="#D6DDDC"/></linearGradient><linearGradient id="bt" x1="0" y1="0" x2="1" y2="0"><stop offset="0" stop-color="#9FB0D8"/><stop offset="1" stop-color="#A3B4DE"/></linearGradient></defs><polygon points="563,258 748,167 810,202 625,293" fill="#A2B2DA" fill-opacity="0.85"/><polygon points="625,293 810,202 810,223 625,314" fill="#A9B7DA" fill-opacity="0.9"/><polygon points="549,169 609,203 604,422 542,386" fill="url(#pf)" fill-opacity="0.97"/><polygon points="609,203 629,195 622,412 604,422" fill="url(#pr)" fill-opacity="0.97"/><polygon points="549,169 567,160 629,195 609,203" fill="#A1B5D3"/><polygon points="563,258 627,227 627,260 625,293" fill="#8E9AB4" fill-opacity="0.35"/><polygon points="563,258 625,293 625,314 563,278" fill="#7C889E" fill-opacity="0.6"/><defs><linearGradient id="rb" x1="0" y1="0" x2="0" y2="1"><stop offset="0.000" stop-color="#E89010"/><stop offset="0.100" stop-color="#E89010"/><stop offset="0.100" stop-color="#E8C010"/><stop offset="0.200" stop-color="#E8C010"/><stop offset="0.200" stop-color="#C8D810"/><stop offset="0.300" stop-color="#C8D810"/><stop offset="0.300" stop-color="#88D010"/><stop offset="0.400" stop-color="#88D010"/><stop offset="0.400" stop-color="#20C020"/><stop offset="0.500" stop-color="#20C020"/><stop offset="0.500" stop-color="#10C890"/><stop offset="0.600" stop-color="#10C890"/><stop offset="0.600" stop-color="#10C0D0"/><stop offset="0.700" stop-color="#10C0D0"/><stop offset="0.700" stop-color="#1090E0"/><stop offset="0.800" stop-color="#1090E0"/><stop offset="0.800" stop-color="#1040D0"/><stop offset="0.900" stop-color="#1040D0"/><stop offset="0.900" stop-color="#0010B0"/><stop offset="1.000" stop-color="#0010B0"/></linearGradient><linearGradient id="rb2" x1="0" y1="0" x2="0" y2="1"><stop offset="0.000" stop-color="#F0A010"/><stop offset="0.125" stop-color="#F0A010"/><stop offset="0.125" stop-color="#E8D010"/><stop offset="0.250" stop-color="#E8D010"/><stop offset="0.250" stop-color="#B8E010"/><stop offset="0.375" stop-color="#B8E010"/><stop offset="0.375" stop-color="#60D820"/><stop offset="0.500" stop-color="#60D820"/><stop offset="0.500" stop-color="#10D040"/><stop offset="0.625" stop-color="#10D040"/><stop offset="0.625" stop-color="#10D0A0"/><stop offset="0.750" stop-color="#10D0A0"/><stop offset="0.750" stop-color="#10C8D8"/><stop offset="0.875" stop-color="#10C8D8"/><stop offset="0.875" stop-color="#1098E8"/><stop offset="1.000" stop-color="#1098E8"/></linearGradient></defs><polygon points="618.6,285.7 626.5,281.3 636.6,287 624.6,292" fill="#E02010" stroke="#111" stroke-width="1"/><polygon points="624.6,292 636.6,287 636,309 624.6,314.4" fill="url(#rb2)" stroke="#111" stroke-width="1"/><path d="M624.6,303 L636.3,297.5" stroke="#111" stroke-width="1"/><polygon points="605.7,289.2 614.9,285.1 624.6,290.4 615.8,294.9" fill="#E81010" stroke="#111" stroke-width="1"/><polygon points="605.7,289.2 615.8,294.9 614.9,322 604.8,316" fill="url(#rb)" stroke="#111" stroke-width="1"/><polygon points="615.8,294.9 624.6,290.4 624.3,317.9 614.9,322" fill="url(#rb2)" stroke="#111" stroke-width="1"/><polygon points="605.7,289.2 615.8,294.9 614.9,322 604.8,316" fill="#000" fill-opacity="0.22"/><path d="M605.2,303 L615.3,308.5 L624.4,304" stroke="#111" stroke-width="1" fill="none"/></svg><div class="a" style="left:310px;top:453px;width:753px;height:1px;background:#CCCEDB"></div>
<div class="a" style="left:310px;top:453px;width:1px;height:20px;background:#CCCEDB"></div>
<div class="t" style="left:315px;top:458px;font-size:12px;color:#3a3a3a">Graph</div>
<div class="a dotg" style="left:352px;top:461px;width:658px;height:6px"></div>
<svg style="left:1010px;top:457px" width="50" height="12" viewBox="0 0 50 12"><path d="M3 3h9l-4.5 5z" fill="#1e1e1e"/><path d="M21 1h6M22 1v6M26 1v6M20 7h8M24 7v5" stroke="#1e1e1e" stroke-width="1.5" fill="none"/><path d="M35 1.5l8 8.5M43 1.5l-8 8.5" stroke="#1e1e1e" stroke-width="1.7"/></svg>
<svg style="left:320px;top:478px" width="4" height="18" viewBox="0 0 4 18"><rect x="0" y="0" width="1" height="1" fill="#8a8a8a"/><rect x="2" y="2" width="1" height="1" fill="#8a8a8a"/><rect x="0" y="4" width="1" height="1" fill="#8a8a8a"/><rect x="2" y="6" width="1" height="1" fill="#8a8a8a"/><rect x="0" y="8" width="1" height="1" fill="#8a8a8a"/><rect x="2" y="10" width="1" height="1" fill="#8a8a8a"/><rect x="0" y="12" width="1" height="1" fill="#8a8a8a"/><rect x="2" y="14" width="1" height="1" fill="#8a8a8a"/><rect x="0" y="16" width="1" height="1" fill="#8a8a8a"/></svg>
<div class="t" style="left:336px;top:480px;font-size:12px;color:#1e1e1e">Animation</div>
<svg style="left:401px;top:480px" width="14" height="14" viewBox="0 0 14 14"><rect x="0" y="0" width="3" height="13" fill="#7a7a7a"/><path d="M13 0v13L4 6.5z" fill="#c4c4c4"/></svg>
<svg style="left:424px;top:480px" width="10" height="14" viewBox="0 0 10 14"><path d="M0 0l9 6.5L0 13z" fill="#D9A520"/></svg>
<div class="a" style="left:440px;top:475px;width:22px;height:22px;border:1px solid #3399FF;background:#F2F6FB"></div>
<div class="a" style="left:445px;top:480px;width:12px;height:13px;background:#D9A520;border:1px solid #333"></div>
<svg style="left:467px;top:480px" width="14" height="14" viewBox="0 0 14 14"><path d="M0 0v13L9 6.5z" fill="#c4c4c4"/><rect x="10" y="0" width="3" height="13" fill="#7a7a7a"/></svg>
<div class="sep" style="left:486px;top:478px;height:18px"></div>
<div class="a" style="left:490px;top:475px;width:22px;height:22px;border:1px solid #3399FF;background:#F2F6FB"></div>
<svg style="left:495px;top:479px" width="15" height="15" viewBox="0 0 15 15"><path d="M1.5 1.5h3v9h-3zM5.5 1.5h3v9h-3zM9.5 1.5h3v9h-3z" stroke="#10d010" stroke-width="1" fill="none"/><path d="M0 13h14" stroke="#e02020" stroke-width="1.3" stroke-dasharray="2 1.5"/></svg>
<svg style="left:516px;top:479px" width="15" height="15" viewBox="0 0 15 15"><path d="M1.5 1.5h3v9h-3zM5.5 1.5h3v9h-3zM9.5 1.5h3v9h-3z" stroke="#2a7ad8" stroke-width="1" fill="none"/><path d="M0 13h14" stroke="#e02020" stroke-width="1.3" stroke-dasharray="2 1.5"/></svg>
<div class="sep" style="left:536px;top:478px;height:18px"></div>
<div class="a" style="left:540px;top:475px;width:100px;height:22px;background:#fff;border:1px solid #CCCEDB"></div>
<div class="t" style="left:544px;top:481px;font-size:11.8px;color:#1e1e1e">20 Frames</div>
<svg style="left:627px;top:484px" width="8" height="5" viewBox="0 0 8 5"><path d="M0 0h7l-3.5 4z" fill="#717171"/></svg>
<div class="a" style="left:639px;top:475px;width:101px;height:22px;background:#fff;border:1px solid #CCCEDB"></div>
<div class="t" style="left:644px;top:481px;font-size:11.6px;color:#1e1e1e">2 Sec (Auto)</div>
<svg style="left:727px;top:484px" width="8" height="5" viewBox="0 0 8 5"><path d="M0 0h7l-3.5 4z" fill="#717171"/></svg>
<div class="sep" style="left:743px;top:478px;height:18px"></div>
<svg style="left:750px;top:479px" width="16" height="15" viewBox="0 0 16 15"><rect x="0.5" y="1" width="13" height="10" fill="#fff" stroke="#333" stroke-width="1.2"/><path d="M1 2.2h12M1 9.8h12" stroke="#333" stroke-width="1.6" stroke-dasharray="1.2 1"/><path d="M3 7q4-4 8 0" stroke="#e02020" stroke-width="1.5" fill="none"/><rect x="7.5" y="6.5" width="7" height="8" fill="#fff" stroke="#3a8ae0" stroke-width="1.2"/><path d="M9.5 6.5v3h3v-3M9.5 14.5v-2h3v2" stroke="#3a8ae0" fill="none"/></svg>
<div class="sep" style="left:770px;top:478px;height:18px"></div>
<svg style="left:777px;top:479px" width="16" height="16" viewBox="0 0 16 16"><circle cx="6.5" cy="6.5" r="5.5" stroke="#333" stroke-width="1.3" fill="#fff"/><path d="M10.5 10.5l4.5 4.5" stroke="#333" stroke-width="1.5"/><path d="M4.5 3.5l5 3-5 3z" fill="#D9A520"/></svg>
<svg style="left:800px;top:479px" width="15" height="15" viewBox="0 0 15 15"><rect x="0" y="0" width="2" height="4" fill="#ff0000"/><rect x="3" y="0" width="2" height="4" fill="#ff0000"/><rect x="6" y="0" width="2" height="4" fill="#ff0000"/><rect x="9" y="0" width="2" height="4" fill="#ff0000"/><rect x="12" y="0" width="2" height="4" fill="#ff0000"/><rect x="0" y="5" width="2" height="4" fill="#00e000"/><rect x="3" y="5" width="2" height="4" fill="#00e000"/><rect x="6" y="5" width="2" height="4" fill="#00e000"/><rect x="9" y="5" width="2" height="4" fill="#00e000"/><rect x="12" y="5" width="2" height="4" fill="#00e000"/><rect x="0" y="10" width="2" height="4" fill="#0000ff"/><rect x="3" y="10" width="2" height="4" fill="#0000ff"/><rect x="6" y="10" width="2" height="4" fill="#0000ff"/><rect x="9" y="10" width="2" height="4" fill="#0000ff"/><rect x="12" y="10" width="2" height="4" fill="#0000ff"/></svg>
<svg style="left:822px;top:479px" width="15" height="15" viewBox="0 0 15 15"><path d="M0.5 13q3-8 6-5t7-7M2 10q2-3 5-2t5 3" stroke="#a8a8a8" stroke-width="1" fill="none"/></svg>
<svg style="left:843px;top:480px" width="16" height="14" viewBox="0 0 16 14"><path d="M4 2l10 4-2 5-10-4z" fill="#b4b4b4"/><path d="M1 9v4M1 11h4l2-2" stroke="#a0a0a0" stroke-width="1.2" fill="none"/></svg>
<div class="sep" style="left:864px;top:478px;height:18px"></div>
<svg style="left:872px;top:480px" width="15" height="13" viewBox="0 0 15 13"><rect x="0" y="0.5" width="14" height="11" fill="#c8c8c8"/><path d="M0 1.5h14M0 10.5h14" stroke="#6a6a6a" stroke-width="1.6" stroke-dasharray="1.2 0.8"/><rect x="0" y="3" width="14" height="6" fill="#d4d4d4" stroke="#888" stroke-width="0.5"/><path d="M4 6h6M4 5v2" stroke="#777" stroke-width="0.8"/></svg>
<svg style="left:894px;top:480px" width="15" height="14" viewBox="0 0 15 14"><rect x="0" y="0.5" width="14" height="11" fill="#c8c8c8"/><path d="M0 1.5h14M0 10.5h14" stroke="#6a6a6a" stroke-width="1.6" stroke-dasharray="1.2 0.8"/><rect x="0" y="3" width="14" height="6" fill="#d4d4d4" stroke="#888" stroke-width="0.5"/><path d="M4 6h6M4 5v2" stroke="#777" stroke-width="0.8"/><path d="M10 12q2 1 3-1" stroke="#999" fill="none"/></svg>
<div class="sep" style="left:914px;top:478px;height:18px"></div>
<svg style="left:922px;top:479px" width="15" height="15" viewBox="0 0 15 15"><path d="M1 5v10M3 2v10M5 4v6M7 5v5M9 6v3M11 7v1M0 8h15" stroke="#a8a8a8" stroke-width="1"/></svg>
<div class="a" style="left:941px;top:475px;width:59px;height:22px;background:#EEEEF2;border:1px solid #CCCEDB"></div>
<div class="t" style="left:944px;top:481px;font-size:12.3px;color:#a0a0a0">3 Cycles</div>
<div class="t" style="left:1004px;top:481px;font-size:11px;font-weight:bold;color:#1e1e1e">AA</div>
<svg style="left:1026px;top:479px" width="15" height="15" viewBox="0 0 15 15"><rect x="0.5" y="2" width="14" height="10" fill="#eee" stroke="#999" stroke-width="0.8"/><path d="M0.5 3h14M0.5 11h14" stroke="#999" stroke-width="1.2" stroke-dasharray="1 1"/><rect x="2.5" y="4.5" width="4" height="4" fill="none" stroke="#999"/><rect x="8.5" y="4.5" width="4" height="4" fill="none" stroke="#999"/></svg>
<svg style="left:1046px;top:489px" width="8" height="5" viewBox="0 0 8 5"><path d="M0 0h7l-3.5 4z" fill="#111"/></svg>
<div class="a" style="left:310px;top:500px;width:752px;height:273px;background:#fff"></div>
<div class="a" style="left:1062px;top:500px;width:1px;height:273px;background:#DCDCDC"></div>
<div class="a" style="left:310px;top:773px;width:753px;height:1px;background:#CCCEDB"></div>
<div class="a" style="left:436px;top:773px;width:43px;height:19px;background:#F7F7F9;border-left:1px solid #CCCEDB;border-right:1px solid #CCCEDB"></div>
<div class="t" style="left:316px;top:776px;font-size:12.2px;color:#3a3a3a">Selection Information</div>
<div class="t" style="left:443px;top:776px;font-size:11.8px;color:#2f7bd0">Graph</div>
<svg style="left:0;top:0" width="1064" height="793" viewBox="0 0 1064 793"><path d="M473.5 524.5 V691.5" stroke="#E0E0E0" stroke-width="1"/><path d="M536.5 524.5 V691.5" stroke="#E0E0E0" stroke-width="1"/><path d="M599.5 524.5 V691.5" stroke="#E0E0E0" stroke-width="1"/><path d="M662.5 524.5 V691.5" stroke="#E0E0E0" stroke-width="1"/><path d="M725.5 524.5 V691.5" stroke="#E0E0E0" stroke-width="1"/><path d="M788.5 524.5 V691.5" stroke="#E0E0E0" stroke-width="1"/><path d="M851.5 524.5 V691.5" stroke="#E0E0E0" stroke-width="1"/><path d="M914.5 524.5 V691.5" stroke="#E0E0E0" stroke-width="1"/><path d="M977.5 524.5 V691.5" stroke="#E0E0E0" stroke-width="1"/><path d="M410.5 524.5V691" stroke="#E0E0E0" stroke-width="1"/><path d="M403 524.5H1040M403 691.5H1040M410.5 691V698" stroke="#A8A8A8" stroke-width="1"/><path d="M403 561.5H410" stroke="#A8A8A8"/><path d="M403 590.5H410" stroke="#A8A8A8"/><path d="M403 617.5H410" stroke="#A8A8A8"/><path d="M403 645.5H410" stroke="#A8A8A8"/><path d="M489.5 691V698" stroke="#A8A8A8"/><path d="M568.5 691V698" stroke="#A8A8A8"/><path d="M646.5 691V698" stroke="#A8A8A8"/><path d="M725.5 691V698" stroke="#A8A8A8"/><path d="M804.5 691V698" stroke="#A8A8A8"/><path d="M882.5 691V698" stroke="#A8A8A8"/><path d="M961.5 691V698" stroke="#A8A8A8"/><path d="M1040.5 691V698" stroke="#A8A8A8"/><polyline points="473.0,688.4 536.0,674.9 599.0,661.4 662.0,647.9 725.0,634.4 788.0,620.9 851.0,607.4 914.0,593.9 977.0,580.4 1040.0,563.3" fill="none" stroke="#1818D8" stroke-width="1.1"/><circle cx="473.0" cy="688.4" r="1.8" fill="#1818D8"/><circle cx="536.0" cy="674.9" r="1.8" fill="#1818D8"/><circle cx="599.0" cy="661.4" r="1.8" fill="#1818D8"/><circle cx="662.0" cy="647.9" r="1.8" fill="#1818D8"/><circle cx="725.0" cy="634.4" r="1.8" fill="#1818D8"/><circle cx="788.0" cy="620.9" r="1.8" fill="#1818D8"/><circle cx="851.0" cy="607.4" r="1.8" fill="#1818D8"/><circle cx="914.0" cy="593.9" r="1.8" fill="#1818D8"/><circle cx="977.0" cy="580.4" r="1.8" fill="#1818D8"/><polyline points="473.0,682.8 536.0,665.2 599.0,647.6 662.0,629.9 725.0,612.3 788.0,594.7 851.0,577.1 914.0,559.4 977.0,541.8 1040.0,524.2" fill="none" stroke="#A020F0" stroke-width="1.1"/><circle cx="473.0" cy="682.8" r="1.8" fill="#A020F0"/><circle cx="536.0" cy="665.2" r="1.8" fill="#A020F0"/><circle cx="599.0" cy="647.6" r="1.8" fill="#A020F0"/><circle cx="662.0" cy="629.9" r="1.8" fill="#A020F0"/><circle cx="725.0" cy="612.3" r="1.8" fill="#A020F0"/><circle cx="788.0" cy="594.7" r="1.8" fill="#A020F0"/><circle cx="851.0" cy="577.1" r="1.8" fill="#A020F0"/><circle cx="914.0" cy="559.4" r="1.8" fill="#A020F0"/><circle cx="977.0" cy="541.8" r="1.8" fill="#A020F0"/><polyline points="473.0,684.0 536.0,666.9 599.0,649.8 662.0,632.8 725.0,615.7 788.0,598.6 851.0,581.5 914.0,564.5 977.0,547.4 1040.0,530.3" fill="none" stroke="#7B1414" stroke-width="1.1"/><circle cx="473.0" cy="684.0" r="1.8" fill="#7B1414"/><circle cx="536.0" cy="666.9" r="1.8" fill="#7B1414"/><circle cx="599.0" cy="649.8" r="1.8" fill="#7B1414"/><circle cx="662.0" cy="632.8" r="1.8" fill="#7B1414"/><circle cx="725.0" cy="615.7" r="1.8" fill="#7B1414"/><circle cx="788.0" cy="598.6" r="1.8" fill="#7B1414"/><circle cx="851.0" cy="581.5" r="1.8" fill="#7B1414"/><circle cx="914.0" cy="564.5" r="1.8" fill="#7B1414"/><circle cx="977.0" cy="547.4" r="1.8" fill="#7B1414"/><polyline points="473.0,686.0 536.0,671.2 599.0,656.3 662.0,641.5 725.0,626.7 788.0,611.8 851.0,597.0 914.0,582.2 977.0,567.3 1040.0,552.5" fill="none" stroke="#1E8C1E" stroke-width="1.1"/><circle cx="473.0" cy="686.0" r="1.8" fill="#1E8C1E"/><circle cx="536.0" cy="671.2" r="1.8" fill="#1E8C1E"/><circle cx="599.0" cy="656.3" r="1.8" fill="#1E8C1E"/><circle cx="662.0" cy="641.5" r="1.8" fill="#1E8C1E"/><circle cx="725.0" cy="626.7" r="1.8" fill="#1E8C1E"/><circle cx="788.0" cy="611.8" r="1.8" fill="#1E8C1E"/><circle cx="851.0" cy="597.0" r="1.8" fill="#1E8C1E"/><circle cx="914.0" cy="582.2" r="1.8" fill="#1E8C1E"/><circle cx="977.0" cy="567.3" r="1.8" fill="#1E8C1E"/><polyline points="473.0,687.0 536.0,673.3 599.0,659.5 662.0,645.8 725.0,632.0 788.0,618.3 851.0,604.5 914.0,590.8 977.0,577.0 1040.0,563.3" fill="none" stroke="#208888" stroke-width="1.1"/><circle cx="473.0" cy="687.0" r="1.8" fill="#208888"/><circle cx="536.0" cy="673.3" r="1.8" fill="#208888"/><circle cx="599.0" cy="659.5" r="1.8" fill="#208888"/><circle cx="662.0" cy="645.8" r="1.8" fill="#208888"/><circle cx="725.0" cy="632.0" r="1.8" fill="#208888"/><circle cx="788.0" cy="618.3" r="1.8" fill="#208888"/><circle cx="851.0" cy="604.5" r="1.8" fill="#208888"/><circle cx="914.0" cy="590.8" r="1.8" fill="#208888"/><circle cx="977.0" cy="577.0" r="1.8" fill="#208888"/><polyline points="473.0,688.4 536.0,674.9 599.0,661.4 662.0,647.9 725.0,634.4 788.0,620.9 851.0,607.4 914.0,593.9 977.0,580.4 1040.0,566.9" fill="none" stroke="#3C1E82" stroke-width="1.1"/><circle cx="473.0" cy="688.4" r="1.8" fill="#3C1E82"/><circle cx="536.0" cy="674.9" r="1.8" fill="#3C1E82"/><circle cx="599.0" cy="661.4" r="1.8" fill="#3C1E82"/><circle cx="662.0" cy="647.9" r="1.8" fill="#3C1E82"/><circle cx="725.0" cy="634.4" r="1.8" fill="#3C1E82"/><circle cx="788.0" cy="620.9" r="1.8" fill="#3C1E82"/><circle cx="851.0" cy="607.4" r="1.8" fill="#3C1E82"/><circle cx="914.0" cy="593.9" r="1.8" fill="#3C1E82"/><circle cx="977.0" cy="580.4" r="1.8" fill="#3C1E82"/><polyline points="473.0,689.8 536.0,678.9 599.0,668.0 662.0,657.1 725.0,646.2 788.0,635.2 851.0,624.3 914.0,613.4 977.0,602.5 1040.0,591.6" fill="none" stroke="#D01E1E" stroke-width="1.1"/><circle cx="473.0" cy="689.8" r="1.8" fill="#D01E1E"/><circle cx="536.0" cy="678.9" r="1.8" fill="#D01E1E"/><circle cx="599.0" cy="668.0" r="1.8" fill="#D01E1E"/><circle cx="662.0" cy="657.1" r="1.8" fill="#D01E1E"/><circle cx="725.0" cy="646.2" r="1.8" fill="#D01E1E"/><circle cx="788.0" cy="635.2" r="1.8" fill="#D01E1E"/><circle cx="851.0" cy="624.3" r="1.8" fill="#D01E1E"/><circle cx="914.0" cy="613.4" r="1.8" fill="#D01E1E"/><circle cx="977.0" cy="602.5" r="1.8" fill="#D01E1E"/><polyline points="473.0,691.2 536.0,681.1 599.0,671.0 662.0,660.9 725.0,650.8 788.0,640.6 851.0,630.5 914.0,620.4 977.0,610.3 1040.0,600.2" fill="none" stroke="#D2641E" stroke-width="1.1"/><circle cx="473.0" cy="691.2" r="1.8" fill="#D2641E"/><circle cx="536.0" cy="681.1" r="1.8" fill="#D2641E"/><circle cx="599.0" cy="671.0" r="1.8" fill="#D2641E"/><circle cx="662.0" cy="660.9" r="1.8" fill="#D2641E"/><circle cx="725.0" cy="650.8" r="1.8" fill="#D2641E"/><circle cx="788.0" cy="640.6" r="1.8" fill="#D2641E"/><circle cx="851.0" cy="630.5" r="1.8" fill="#D2641E"/><circle cx="914.0" cy="620.4" r="1.8" fill="#D2641E"/><circle cx="977.0" cy="610.3" r="1.8" fill="#D2641E"/><rect x="1038" y="519" width="3.5" height="173" rx="1.5" fill="#000"/><rect x="1038" y="522.7" width="3.5" height="3" fill="#A020F0"/><rect x="1038" y="528.8" width="3.5" height="3" fill="#7B1414"/><rect x="1038" y="551.0" width="3.5" height="3" fill="#1E8C1E"/><rect x="1038" y="561.8" width="3.5" height="3" fill="#208888"/><rect x="1038" y="565.4" width="3.5" height="3" fill="#3C1E82"/><rect x="1038" y="590.1" width="3.5" height="3" fill="#D01E1E"/><rect x="1038" y="598.7" width="3.5" height="3" fill="#D2641E"/></svg>
<div class="t" style="left:299px;width:100px;text-align:right;top:519.9px;font-size:10.6px;color:#1e1e1e">1.57e-5</div>
<div class="t" style="left:299px;width:100px;text-align:right;top:556.8px;font-size:10.6px;color:#1e1e1e">1.25e-5</div>
<div class="t" style="left:299px;width:100px;text-align:right;top:584.9px;font-size:10.6px;color:#1e1e1e">1.e-5</div>
<div class="t" style="left:299px;width:100px;text-align:right;top:612.8px;font-size:10.6px;color:#1e1e1e">7.5e-6</div>
<div class="t" style="left:299px;width:100px;text-align:right;top:640.7px;font-size:10.6px;color:#1e1e1e">5.e-6</div>
<div class="t" style="left:299px;width:100px;text-align:right;top:686.9px;font-size:10.6px;color:#1e1e1e">8.9866e-7</div>
<div class="t" style="left:408.0px;top:704px;font-size:10.6px;color:#1e1e1e">0.</div>
<div class="t" style="left:486.8px;top:704px;font-size:10.6px;color:#1e1e1e">1.25</div>
<div class="t" style="left:565.5px;top:704px;font-size:10.6px;color:#1e1e1e">2.5</div>
<div class="t" style="left:644.2px;top:704px;font-size:10.6px;color:#1e1e1e">3.75</div>
<div class="t" style="left:723.0px;top:704px;font-size:10.6px;color:#1e1e1e">5.</div>
<div class="t" style="left:801.8px;top:704px;font-size:10.6px;color:#1e1e1e">6.25</div>
<div class="t" style="left:880.5px;top:704px;font-size:10.6px;color:#1e1e1e">7.5</div>
<div class="t" style="left:959.2px;top:704px;font-size:10.6px;color:#1e1e1e">8.75</div>
<div class="t" style="left:1025px;top:704px;font-size:10.6px;color:#1e1e1e">10.</div>
<div class="t" style="left:1024px;top:505px;font-size:11px;font-weight:bold;color:#000">10.</div>
<div class="t" style="left:718px;top:726px;font-size:12px;font-weight:bold;color:#000">[s]</div>
<div class="t" style="left:334px;font-size:12.5px;font-weight:bold;color:#000;transform:rotate(-90deg);transform-origin:0 0;top:617px">[m]</div>
<div class="a" style="left:410px;top:746px;width:64px;height:15px;background:#F0F0F0;border:1px solid #A0A0A0"></div>
<div class="t" style="left:410px;width:63px;text-align:center;top:749px;font-size:11px;color:#1e1e1e">1</div>
<div class="a" style="left:473px;top:746px;width:64px;height:15px;background:#F0F0F0;border:1px solid #A0A0A0"></div>
<div class="t" style="left:473px;width:63px;text-align:center;top:749px;font-size:11px;color:#1e1e1e">2</div>
<div class="a" style="left:536px;top:746px;width:64px;height:15px;background:#F0F0F0;border:1px solid #A0A0A0"></div>
<div class="t" style="left:536px;width:63px;text-align:center;top:749px;font-size:11px;color:#1e1e1e">3</div>
<div class="a" style="left:599px;top:746px;width:64px;height:15px;background:#F0F0F0;border:1px solid #A0A0A0"></div>
<div class="t" style="left:599px;width:63px;text-align:center;top:749px;font-size:11px;color:#1e1e1e">4</div>
<div class="a" style="left:662px;top:746px;width:64px;height:15px;background:#F0F0F0;border:1px solid #A0A0A0"></div>
<div class="t" style="left:662px;width:63px;text-align:center;top:749px;font-size:11px;color:#1e1e1e">5</div>
<div class="a" style="left:725px;top:746px;width:64px;height:15px;background:#F0F0F0;border:1px solid #A0A0A0"></div>
<div class="t" style="left:725px;width:63px;text-align:center;top:749px;font-size:11px;color:#1e1e1e">6</div>
<div class="a" style="left:788px;top:746px;width:64px;height:15px;background:#F0F0F0;border:1px solid #A0A0A0"></div>
<div class="t" style="left:788px;width:63px;text-align:center;top:749px;font-size:11px;color:#1e1e1e">7</div>
<div class="a" style="left:851px;top:746px;width:64px;height:15px;background:#F0F0F0;border:1px solid #A0A0A0"></div>
<div class="t" style="left:851px;width:63px;text-align:center;top:749px;font-size:11px;color:#1e1e1e">8</div>
<div class="a" style="left:914px;top:746px;width:64px;height:15px;background:#F0F0F0;border:1px solid #A0A0A0"></div>
<div class="t" style="left:914px;width:63px;text-align:center;top:749px;font-size:11px;color:#1e1e1e">9</div>
<div class="a" style="left:977px;top:746px;width:63px;height:15px;background:#F0F0F0;border:1px solid #A0A0A0"></div>
<div class="t" style="left:977px;width:63px;text-align:center;top:749px;font-size:11px;color:#1e1e1e">10</div></body></html>
